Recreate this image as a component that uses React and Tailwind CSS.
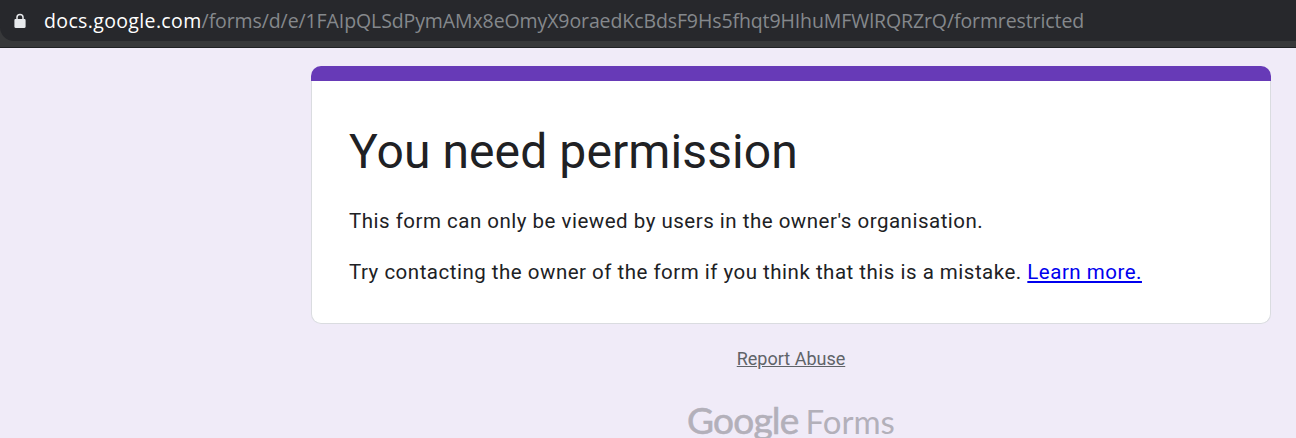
import React from "react";

export default function App() {
  return (
    <div className="h-[438px] w-[1296px] overflow-hidden bg-[#f0ebf8] font-['Roboto',sans-serif]">
      <div className="h-[48px] border-b border-[#202124] bg-[#37383a]">
        <div className="flex h-[41px] items-center rounded-bl-[14px] bg-[#27282c] pl-[14px]">
          <svg width="12" height="16" viewBox="0 0 12 16" className="shrink-0">
            <path d="M1.6 6h8.8c.7 0 1.2.5 1.2 1.2v6.6c0 .7-.5 1.2-1.2 1.2H1.6C.9 15 .4 14.500 .4 13.800V7.200C.4 6.500 .9 6 1.600 6z" fill="#e8eaed" />
            <path d="M3 6.500V4.300C3 2.600 4.300 1.500 6 1.500s3 1.100 3 2.800v2.200" fill="none" stroke="#e8eaed" strokeWidth="1.500" />
          </svg>
          <div className="ml-[18px] whitespace-nowrap font-['Open_Sans',sans-serif] text-[19.500px] leading-[41px] text-[#85888c]">
            <span className="tracking-[0.36px] text-white">docs.google.com</span>
            <span className="tracking-[-0.1px]">/forms/d/e/1FAIpQLSdPymAMx8eOmyX9oraedKcBdsF9Hs5fhqt9HIhuMFWlRQRZrQ/formrestricted</span>
          </div>
        </div>
      </div>
      <div className="ml-[311px] mt-[18px] flex w-[960px] flex-col items-center">
        <main className="w-full">
          <div className="h-[15px] rounded-t-[10px] bg-[#673ab7]" />
          <div className="rounded-b-[10px] border-x border-b border-[#dadce0] bg-white px-[37px] pb-[37px] pt-[41px] text-[#202124]">
            <h1 className="text-[48px] font-normal leading-[60px] tracking-[0.1px]">You need permission</h1>
            <p className="mt-[25px] text-[20.500px] leading-[28px] tracking-[0.5px]">
              This form can only be viewed by users in the owner's organisation.
            </p>
            <p className="mt-[23px] text-[20.500px] leading-[28px] tracking-[0.5px]">
              Try contacting the owner of the form if you think that this is a mistake.{" "}
              <a href="#" className="text-[#0000ee] underline">Learn more.</a>
            </p>
          </div>
        </main>
        <a href="#" className="mt-[23px] text-[18px] leading-[24px] text-[#5f6368] underline">Report Abuse</a>
        <div className="mt-[27px] flex items-baseline whitespace-nowrap font-['Lato',sans-serif] text-[37px] leading-[44px] text-[#b3b0ba]">
          <span className="tracking-[-0.8px] [-webkit-text-stroke:0.6px_#b3b0ba]">Google</span>
          <span className="ml-[7px] text-[33px]">Forms</span>
        </div>
      </div>
    </div>
  );
}
